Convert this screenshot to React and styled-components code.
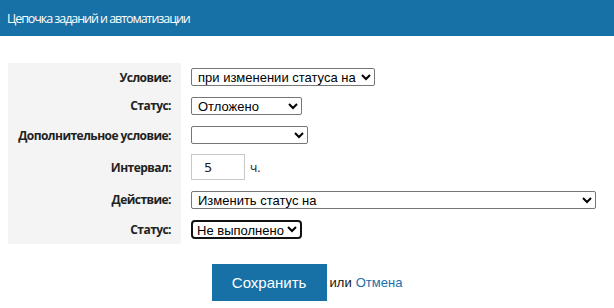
import React from 'react'
import styled, { createGlobalStyle } from 'styled-components'

const GlobalStyle = createGlobalStyle`
    body {
        margin: 0;
        background: #ffffff;
        font-family: "Open Sans", "Liberation Sans", sans-serif;
    }
`

const Header = styled.div`
    display: flex;
    align-items: center;
    height: 36px;
    padding-left: 7px;
    background: #1771a6;
    color: #ffffff;
    font-size: 12.5px;
    letter-spacing: -1.05px;
`

const Form = styled.div`
    display: flex;
    flex-direction: column;
    padding: 27px 8px 0 8px;
`

const Grid = styled.div`
    display: grid;
    grid-template-columns: 173px 1fr;
    column-gap: 10px;
`

const LabelCell = styled.div`
    display: flex;
    align-items: center;
    justify-content: flex-end;
    height: ${props => props.height || '29px'};
    padding-right: 10px;
    background: #f4f4f4;
    font-size: 12px;
    font-weight: 700;
    letter-spacing: -0.55px;
    white-space: nowrap;
    color: #222222;
`

const FieldCell = styled.div`
    display: flex;
    align-items: center;
    gap: 5px;
    height: ${props => props.height || '29px'};
`

const Select = styled.select`
    width: ${props => props.width};
    height: ${props => props.focused ? '19px' : '18px'};
    padding: 0 0 0 ${props => props.focused ? '0' : '2px'};
    border: ${props => props.focused ? '2px solid #111111' : '1px solid #767676'};
    border-radius: ${props => props.focused ? '4px' : '2px'};
    background: #ffffff;
    color: #000000;
    font-family: "Liberation Sans", Arial, sans-serif;
    font-size: 13px;
    outline: none;
`

const NumberInput = styled.input`
    width: 54px;
    height: 26px;
    box-sizing: border-box;
    padding: 0 0 0 12px;
    border: 1px solid #c8c8c8;
    font-family: "DejaVu Sans", sans-serif;
    font-size: 13px;
    color: #222222;
`

const Unit = styled.span`
    font-size: 12px;
    color: #222222;
`

const Actions = styled.div`
    display: flex;
    align-items: center;
    justify-content: center;
    margin-top: 20px;
    font-family: "Liberation Sans", Arial, sans-serif;
    font-size: 13px;
    color: #111111;
`

const SaveButton = styled.button`
    width: 115px;
    height: 37px;
    margin-right: 3px;
    border: none;
    background: #1771a6;
    color: #ffffff;
    font-family: "Liberation Sans", Arial, sans-serif;
    font-size: 15px;
`

const Link = styled.a`
    margin-left: 4px;
    color: #1a6fa8;
    text-decoration: none;
`

const App = () => {
    return (
        <>
            <GlobalStyle />
            <Header>Цепочка заданий и автоматизации</Header>
            <Form>
                <Grid>
                    <LabelCell height='28px'>Условие:</LabelCell>
                    <FieldCell height='28px'>
                        <Select width='184px' defaultValue='status'>
                            <option value='status'>при изменении статуса на</option>
                        </Select>
                    </FieldCell>

                    <LabelCell>Статус:</LabelCell>
                    <FieldCell>
                        <Select width='111px' defaultValue='delayed'>
                            <option value='delayed'>Отложено</option>
                            <option value='fail'>Не выполнено</option>
                        </Select>
                    </FieldCell>

                    <LabelCell height='30px'>Дополнительное условие:</LabelCell>
                    <FieldCell height='30px'>
                        <Select width='117px' defaultValue=''>
                            <option value=''></option>
                        </Select>
                    </FieldCell>

                    <LabelCell height='34px'>Интервал:</LabelCell>
                    <FieldCell height='34px'>
                        <NumberInput type='text' defaultValue='5' />
                        <Unit>ч.</Unit>
                    </FieldCell>

                    <LabelCell height='31px'>Действие:</LabelCell>
                    <FieldCell height='31px'>
                        <Select width='405px' defaultValue='change'>
                            <option value='change'>Изменить статус на</option>
                        </Select>
                    </FieldCell>

                    <LabelCell>Статус:</LabelCell>
                    <FieldCell>
                        <Select width='111px' focused defaultValue='fail'>
                            <option value='delayed'>Отложено</option>
                            <option value='fail'>Не выполнено</option>
                        </Select>
                    </FieldCell>
                </Grid>
                <Actions>
                    <SaveButton>Сохранить</SaveButton>
                    или
                    <Link href='#'>Отмена</Link>
                </Actions>
            </Form>
        </>
    )
}

export default App
